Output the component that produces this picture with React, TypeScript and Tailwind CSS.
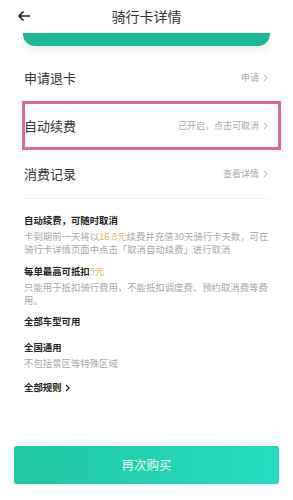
import React from "react";

const font = { fontFamily: '"Noto Sans CJK SC", "Noto Sans", sans-serif' };

function Chevron() {
  return (
    <svg width="5" height="8" viewBox="0 0 5 8" className="ml-[4px]">
      <path d="M1 1 L4 4 L1 7" fill="none" stroke="#b5b5b5" strokeWidth="1" />
    </svg>
  );
}

function Row({ label, hint, boxed }: { label: string; hint: string; boxed?: boolean }) {
  return (
    <div className="relative flex h-[48px] items-center justify-between pl-[24px] pr-[25px]">
      <span className="text-[13px] text-[#333]">{label}</span>
      <span className="flex items-center text-[9px] text-[#aaa]">
        {hint}
        <Chevron />
      </span>
      {boxed && (
        <div className="absolute left-[22px] right-[12px] top-[-1px] bottom-[0px] border-[3px] border-[#e2669a]" />
      )}
    </div>
  );
}

export default function App() {
  return (
    <div className="h-[500px] w-[293px] overflow-hidden bg-white" style={font}>
      <header className="relative flex h-[32px] items-center justify-center">
        <svg width="14" height="12" viewBox="0 0 14 12" className="absolute left-[17px] top-[10px]">
          <path d="M13 6 H2 M6.5 1.5 L2 6 L6.5 10.5" fill="none" stroke="#222" strokeWidth="1.6" />
        </svg>
        <h1 className="text-[14px] text-[#333]">骑行卡详情</h1>
      </header>

      <div className="mx-[23px] mt-[1px] h-[13px] rounded-b-[12px] bg-[#1bb99a] shadow-[0_4px_8px_rgba(0,0,0,0.08)]" />

      <div className="mt-[8px]">
        <Row label="申请退卡" hint="申请" />
        <Row label="自动续费" hint="已开启，点击可取消" boxed />
        <Row label="消费记录" hint="查看详情" />
      </div>

      <div className="mx-[24px] h-px bg-[#f0f0f0]" />

      <div className="pl-[24px] pr-[20px] pt-[15px] text-[9.4px] leading-[13px]">
        <p className="font-bold text-[#222]">自动续费，可随时取消</p>
        <div className="mt-[3px] whitespace-nowrap text-[#a8a8a8]">
          <p>
            卡到期前一天将以<span className="text-[#e9b66e]">16.8元</span>续费并充值30天骑行卡天数，可在
          </p>
          <p>骑行卡详情页面中点击「取消自动续费」进行取消</p>
        </div>

        <p className="mt-[9px] font-bold text-[#222]">
          每单最高可抵扣<span className="font-normal text-[#e9b66e]">5元</span>
        </p>
        <div className="mt-[3px] whitespace-nowrap text-[#a8a8a8]">
          <p>只能用于抵扣骑行费用，不能抵扣调度费、预约取消费等费</p>
          <p>用。</p>
        </div>

        <p className="mt-[8px] font-bold text-[#222]">全部车型可用</p>

        <p className="mt-[13px] font-bold text-[#222]">全国通用</p>
        <p className="mt-[3px] text-[#a8a8a8]">不包括景区等特殊区域</p>

        <p className="mt-[11px] flex items-center font-bold text-[#222]">
          全部规则
          <svg width="5" height="8" viewBox="0 0 5 8" className="ml-[3px]">
            <path d="M1 1 L4 4 L1 7" fill="none" stroke="#222" strokeWidth="1.2" />
          </svg>
        </p>
      </div>

      <div className="mt-[52px] px-[14px]">
        <button
          type="button"
          className="flex h-[38px] w-full items-center justify-center rounded-[3px] bg-gradient-to-r from-[#20c6a3] to-[#26dcc0] text-[12.5px] text-[#e6fbf5] shadow-[0_1px_3px_rgba(0,0,0,0.12)]"
        >
          再次购买
        </button>
      </div>
    </div>
  );
}
